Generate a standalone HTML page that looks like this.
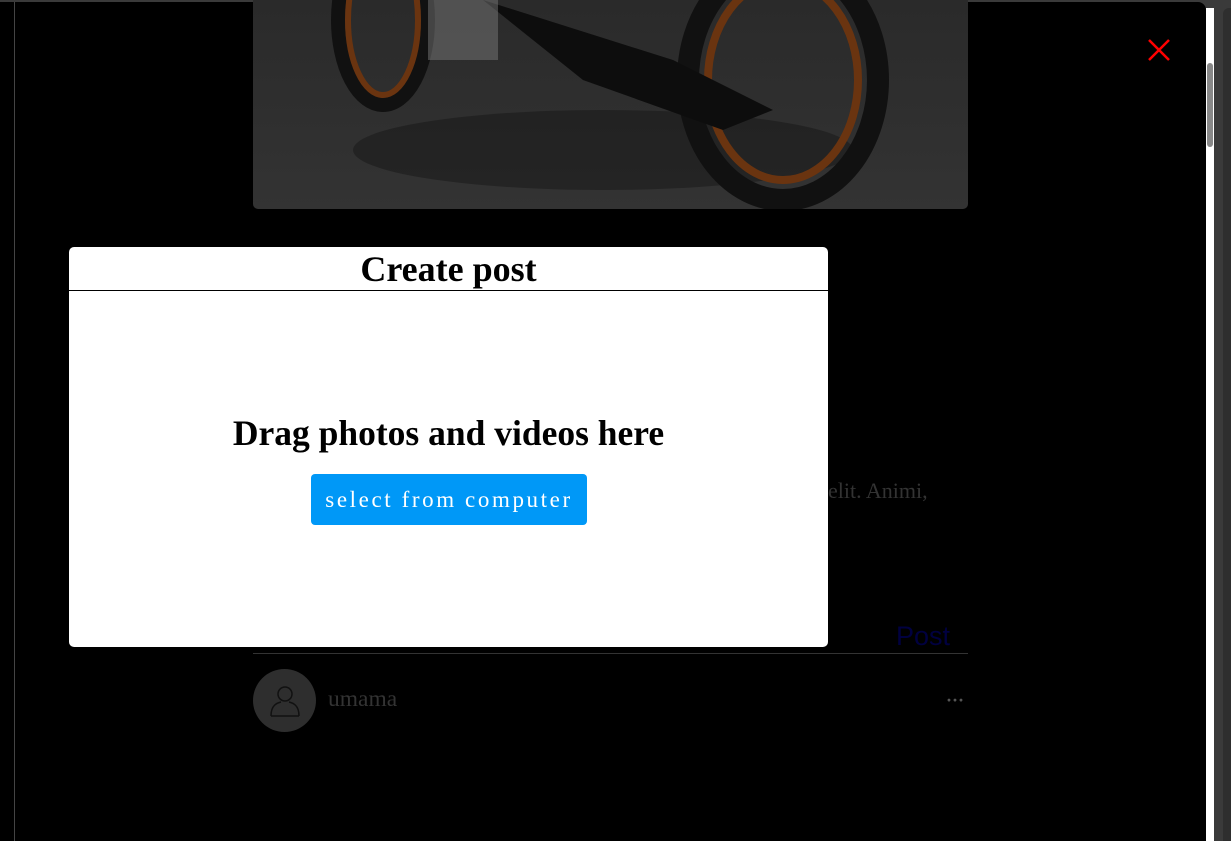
<!DOCTYPE html>
<html><head><style>
body{margin:0;width:1231px;height:841px;background:#3a3a3a;position:relative;overflow:hidden;font-family:"Liberation Serif",serif}
.main{position:absolute;left:0;top:2px;width:1206px;height:839px;background:#000;border-top-right-radius:8px}
.lline{position:absolute;left:14px;top:2px;width:1px;height:839px;background:#444}
.wstrip{position:absolute;left:1206px;top:8px;width:8px;height:833px;background:#fff}
.thumb{position:absolute;left:1207px;top:63px;width:6px;height:84px;background:#888;border-radius:3px}
.rpanel{position:absolute;left:1223px;top:8px;width:8px;height:833px;background:#2e2e2e;border-top-left-radius:6px}
.img{position:absolute;left:253px;top:0;width:715px;height:209px;background:linear-gradient(180deg,#2a2a2a,#333);border-radius:0 0 5px 5px;overflow:hidden}
.modal{position:absolute;left:69px;top:247px;width:759px;height:400px;background:#fff;border-radius:5px}
.hd{height:43px;border-bottom:1px solid #000;text-align:center;font-weight:bold;font-size:36px;line-height:45px}
.drag{position:absolute;top:165px;width:100%;text-align:center;font-weight:bold;font-size:35.5px}
.btn{position:absolute;left:242px;top:227px;width:276px;height:51px;background:#0098f7;border-radius:4px;color:#fff;font-size:23px;letter-spacing:2.6px;line-height:51px;text-align:center}
</style></head><body>
<div class="main"></div>
<div class="lline"></div>
<div class="wstrip"></div><div class="thumb"></div><div class="rpanel"></div>
<div class="img">
<svg width="715" height="209">
<ellipse cx="350" cy="150" rx="250" ry="40" fill="#1a1a1a" opacity=".6"/>
<ellipse cx="130" cy="20" rx="45" ry="85" fill="none" stroke="#111" stroke-width="14"/>
<ellipse cx="130" cy="20" rx="35" ry="75" fill="none" stroke="#6a3410" stroke-width="6"/>
<ellipse cx="530" cy="80" rx="95" ry="120" fill="none" stroke="#111" stroke-width="22"/>
<ellipse cx="530" cy="80" rx="75" ry="100" fill="none" stroke="#6a3410" stroke-width="8"/>
<path d="M230 0 L420 60 L520 110 L470 130 L330 80 L280 40 Z" fill="#0d0d0d"/>
<rect x="175" y="0" width="70" height="60" fill="#777" opacity=".5"/>
</svg></div>
<svg style="position:absolute;left:1148px;top:39px" width="22" height="22"><path d="M1 1L21 21M21 1L1 21" stroke="#f00" stroke-width="2.5"/></svg>
<div style="position:absolute;left:828px;top:478px;color:#333;font-size:22px">elit. Animi,</div>
<div style="position:absolute;left:896px;top:621px;color:#000040;font-size:27px;font-family:'Liberation Sans',sans-serif">Post</div>
<div style="position:absolute;left:253px;top:653px;width:715px;height:1px;background:#333"></div>
<div style="position:absolute;left:253px;top:669px;width:63px;height:63px;border-radius:50%;background:#2e2e2e"></div>
<svg style="position:absolute;left:267px;top:683px" width="36" height="36"><circle cx="18" cy="11" r="7" fill="none" stroke="#111" stroke-width="1.5"/><path d="M4 33 C4 22 10 20 14 19 M32 33 C32 22 26 20 22 19 M4 33H32" fill="none" stroke="#111" stroke-width="1.5"/></svg>
<div style="position:absolute;left:328px;top:686px;color:#333;font-size:23.5px">umama</div>
<div style="position:absolute;left:946px;top:690px;color:#555;font-size:18px;letter-spacing:0px;font-weight:bold">···</div>
<div class="modal">
<div class="hd">Create post</div>
<div class="drag">Drag photos and videos here</div>
<div class="btn">select from computer</div>
</div>
</body></html>
